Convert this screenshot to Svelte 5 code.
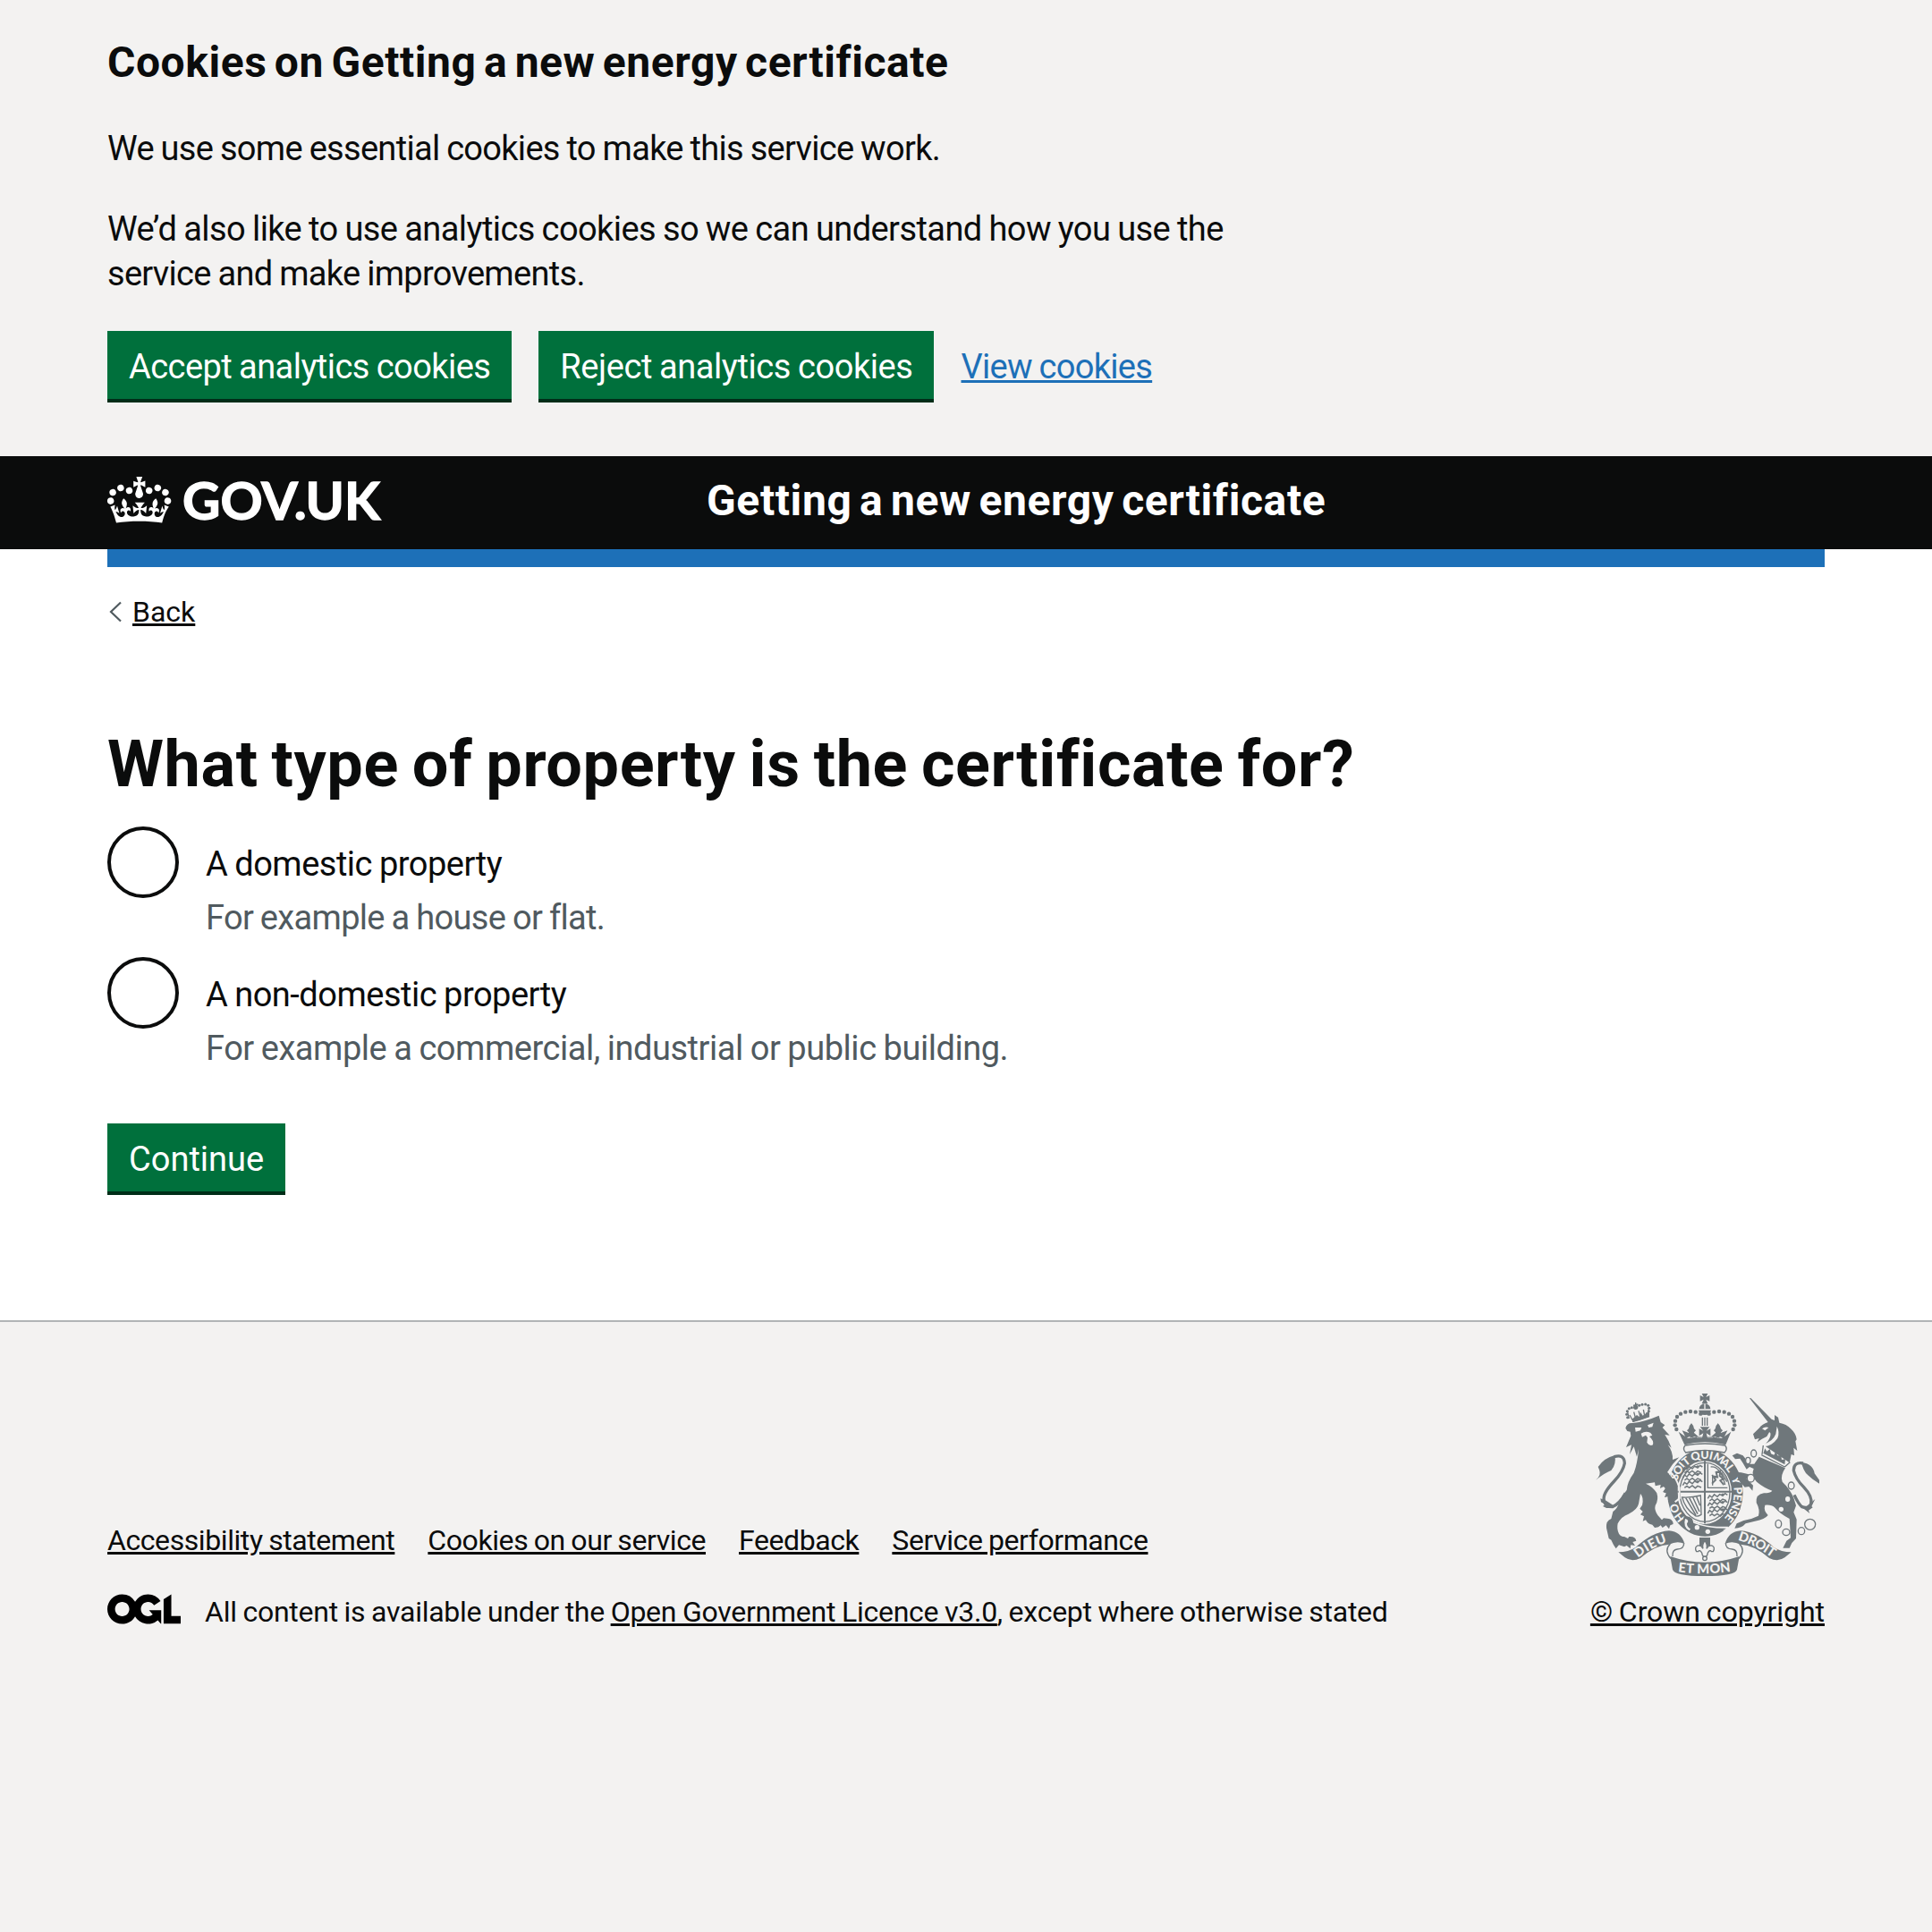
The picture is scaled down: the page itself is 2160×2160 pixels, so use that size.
<script>
  const options = [
    { value: 'domestic', label: 'A domestic property', hint: 'For example a house or flat.' },
    {
      value: 'non-domestic',
      label: 'A non-domestic property',
      hint: 'For example a commercial, industrial or public building.'
    }
  ];
  const footerLinks = [
    { id: 'accessibility', text: 'Accessibility statement' },
    { id: 'cookies', text: 'Cookies on our service' },
    { id: 'feedback', text: 'Feedback' },
    { id: 'performance', text: 'Service performance' }
  ];

  // Garter motto: each letter with its clockwise angle from the top of the ring
  const motto = [
    ['H', -131], ['O', -115], ['S', -65], ['O', -53], ['I', -43], ['T', -34],
    ['Q', -16], ['U', 0], ['I', 11], ['M', 25], ['A', 38], ['L', 50], ['Y', 71],
    ['P', 87], ['E', 98], ['N', 110], ['S', 122], ['E', 133]
  ].map(([char, deg]) => {
    const a = (deg * Math.PI) / 180;
    const rx = 98;
    const ry = 114;
    const x = 438 + rx * Math.sin(a);
    const y = 386 - ry * Math.cos(a);
    const turn = (Math.atan2(ry * Math.sin(a), rx * Math.cos(a)) * 180) / Math.PI;
    return { char, transform: `translate(${x} ${y}) rotate(${turn})` };
  });

  // Pearls of the large crown, left half; the right half is mirrored
  const pearls = [
    [424, 122], [407, 116], [390, 114], [373, 116], [357, 122],
    [345, 132], [339, 146], [338, 160], [343, 174]
  ];
  const smallPearls = [
    [179, 134], [176, 124], [178, 113], [184, 104], [193, 101], [218, 94],
    [228, 91], [239, 90], [248, 94], [251, 103], [250, 113], [245, 121]
  ];
  const chain = [
    [602, 255, 9, 12], [583, 279, 8, 11], [592, 338, 12, 13], [728, 363, 10, 12],
    [685, 491, 10, 13], [711, 519, 12, 11], [762, 515, 11, 12], [791, 493, 18, 18]
  ];
  const beasts = [
    [364, 300], [364, 325], [364, 350], [448, 394], [448, 419], [448, 444]
  ];
</script>

<div class="page">
  <section class="banner" aria-label="Cookies on Getting a new energy certificate">
    <h2>Cookies on Getting a new energy certificate</h2>
    <p class="essential">We use some essential cookies to make this service work.</p>
    <p class="analytics">We’d also like to use analytics cookies so we can understand how you use the service and make improvements.</p>
    <div class="actions">
      <button class="accept">Accept analytics cookies</button>
      <button class="reject">Reject analytics cookies</button>
      <a class="view" href="#cookies">View cookies</a>
    </div>
  </section>

  <header>
    <div class="bar">
      <svg class="govuk" viewBox="0 0 310 60" role="img" aria-label="GOV.UK">
        <path
          transform="translate(0 -1.4) scale(2)"
          fill-rule="evenodd"
          d="M6.7 12.2c1 .4 2.1-.1 2.5-1s-.1-2.1-1-2.5c-1-.4-2.1.1-2.5 1-.4 1 0 2.1 1 2.5m-4.3 2.5c.9.4 2-.1 2.4-1s-.1-2.1-1-2.5c-1-.4-2.1.1-2.5 1-.4 1 .1 2.1 1.1 2.5m-1.3 4.8c1 .4 2.1-.1 2.5-1s-.1-2.1-1-2.5c-1-.4-2.1.1-2.5 1-.4 1 0 2.1 1 2.5m10.4-5.8c1 .4 2.1-.1 2.5-1s-.1-2.1-1-2.5c-1-.4-2.1.1-2.5 1s0 2.1 1 2.5m17.4-1.5c-1 .4-2.1-.1-2.5-1s.1-2.1 1-2.5c1-.4 2.1.1 2.5 1 .5 1 0 2.1-1 2.5m4.3 2.5c-1 .4-2.1-.1-2.5-1s.1-2.1 1-2.5c1-.4 2.1.1 2.5 1 .5 1 0 2.1-1 2.5m1.3 4.8c-1 .4-2.1-.1-2.5-1s.1-2.1 1-2.5c1-.4 2.1.1 2.5 1 .4 1 0 2.1-1 2.5m-10.4-5.8c-1 .4-2.1-.1-2.5-1s.1-2.1 1-2.5c1-.4 2.1.1 2.5 1s0 2.1-1 2.5m-5.3-4.9 2.4 1.3V6.5l-2.4.8c-.1-.1-.1-.1-.2-.1s1-3 1-3h-3.4l1 3c-.1.1-.2.1-.2.1-.1.1-2.4-.7-2.4-.7v3.5L17 8.8c-.1.1 0 .2.1.3l-1.4 4.2c-.1.2-.1.4-.1.7 0 1.1.8 2.1 1.9 2.2h.6C19.2 16 20 15.1 20 14c0-.2 0-.4-.1-.7l-1.4-4.2c.2-.1.3-.2.3-.3m-1 20.3c4.6 0 8.9.3 12.8.9 1.1-4.6 2.4-7.2 3.8-9.1l-2.6-.9c.3 1.3.3 1.9 0 2.8-.4-.4-.8-1.2-1.1-2.4l-1.2 4.2c.8-.5 1.4-.9 2-.9-1.2 2.6-2.7 3.2-3.6 3-1.2-.2-1.7-1.3-1.5-2.2.3-1.3 1.6-1.6 2.2-.1 1.2-2.4-.8-3.1-2.1-2.4 1.9-1.9 2.2-3.6.6-5.7-2.2 1.7-2.2 3.3-1.2 5.6-1.3-1.5-3.3-.7-2.5 1.7.9-1.4 2.1-.5 1.9.8-.2 1.2-1.7 2.2-3.7 2-2.8-.2-3-2.2-3-3.7.7-.1 1.9.5 3 2l.5-4.4c-1.1 1.1-2.2 1.4-3.3 1.4.4-1.2 2.1-3.1 2.1-3.1h-5.5s1.8 1.9 2.1 3.1c-1.1 0-2.2-.3-3.3-1.4l.5 4.4c1.1-1.5 2.3-2.1 3-2-.1 1.6-.2 3.5-3 3.7-1.9.2-3.5-.8-3.7-2-.2-1.3 1-2.2 1.9-.8.7-2.4-1.3-3.1-2.6-1.7 1-2.3 1-4-1.2-5.6-1.6 2.1-1.3 3.8.6 5.7-1.3-.7-3.2 0-2.1 2.4.6-1.5 1.9-1.1 2.2.1.2.9-.4 1.9-1.5 2.2-1 .2-2.5-.5-3.6-3 .7.1 1.3.4 2 .9l-1.2-4.2c-.4 1.2-.8 2-1.2 2.4-.3-.8-.2-1.5 0-2.8l-2.6.9C2.6 22.7 3.9 25.4 5 30c3.9-.6 8.2-.9 12.8-.9"
        />
        <text x="84" y="54.7" textLength="221" lengthAdjust="spacingAndGlyphs">GOV.UK</text>
      </svg>
      <span class="service">Getting a new energy certificate</span>
    </div>
    <div class="stripe"></div>
  </header>

  <main>
    <a class="back" href="#back">
      <svg viewBox="0 0 14 24" aria-hidden="true"><path d="M13 1.5 2 12l11 10.5" /></svg>
      <span>Back</span>
    </a>
    <h1>What type of property is the certificate for?</h1>
    <div class="radios">
      {#each options as option (option.value)}
        <label class="option {option.value}">
          <input type="radio" name="property" value={option.value} />
          <span class="option-text">
            <span class="option-label">{option.label}</span>
            <span class="hint">{option.hint}</span>
          </span>
        </label>
      {/each}
    </div>
    <button class="continue">Continue</button>
  </main>

  <footer>
    <div class="meta">
      <nav>
        {#each footerLinks as link (link.id)}
          <a href="#{link.id}">{link.text}</a>
        {/each}
      </nav>
      <div class="licence">
        <svg viewBox="0 0 483.2 195.7" aria-hidden="true">
          <path
            d="M421.5 142.8V.1l-50.7 32.3v161.1h112.4v-50.7zm-122.3-9.6A47.12 47.12 0 0 1 221 97.8c0-26 21.1-47.1 47.1-47.1 16.7 0 31.4 8.7 39.7 21.8l42.7-27.2A97.63 97.63 0 0 0 268.1 0c-36.5 0-68.3 20.1-85.1 49.7A98 98 0 0 0 97.8 0C43.9 0 0 43.9 0 97.8s43.9 97.8 97.8 97.8c36.5 0 68.3-20.1 85.1-49.7a97.76 97.76 0 0 0 149.6 25.4l19.4 22.2h3v-87.8h-80l24.3 27.5zM97.8 145c-26 0-47.1-21.1-47.1-47.1s21.1-47.1 47.1-47.1 47.1 21.1 47.1 47.1S123.8 145 97.8 145"
          />
        </svg>
        <span>All content is available under the <a href="#ogl">Open Government Licence v3.0</a>, except where otherwise stated</span>
      </div>
    </div>

    <div class="copyright">
      <svg class="arms" viewBox="72 54 750 612" role="img" aria-label="Royal coat of arms">
        <!-- lion -->
        <path class="line tail" d="M134 266Q168 256 169 288Q164 316 134 348Q94 390 100 412Q104 434 128 434Q152 424 172 388" />
        <path d="M72 344Q92 330 84 310L80 300Q100 270 136 261Q142 292 124 312Q106 318 72 344ZM88 406L108 414L130 428L126 438L108 438L96 432L104 426L90 418Z" />
        <path
          d="M172 170Q176 152 196 153Q238 148 284 128L290 150L304 160L296 168L320 194L304 192Q318 212 326 236L314 226Q332 250 330 276L352 268Q328 290 312 318Q334 335 346 372L348 402L338 412L334 396L326 412L316 410L318 398L304 402L308 388L298 384L306 372L300 366L288 372L290 360L272 364L270 352L240 356Q264 366 277 388Q284 410 272 430Q268 445 280 462L294 478L300 472L318 474Q332 478 332 492L322 496L318 508L308 496L296 504L290 496L282 502L270 504L262 494Q246 492 240 478L230 482L234 466L222 460L230 450L220 440L228 428Q234 402 222 390L216 424Q212 444 182 458Q158 466 146 490Q142 510 150 524Q156 534 168 534L180 540L184 534Q206 532 208 548L196 552L204 564L190 562L188 574L176 564L168 568L150 562L140 574L132 562L124 545L116 540L108 505Q106 480 124 474L130 450Q145 440 150 420Q158 398 176 378Q178 350 200 320Q212 290 216 240L210 266L200 232L186 258L192 226L174 234L190 196L188 182L178 180Z"
        />
        <path class="cut" d="M204 168L226 168L222 178L206 182ZM246 160L266 152L262 166L250 168ZM224 188Q240 178 256 186L262 194L252 198Q268 212 264 226Q252 232 244 218L246 202L240 194L228 200Z" />
        <path class="line" d="M196 148Q222 142 252 130M184 138Q180 120 178 112M250 128L250 104M186 126L196 144M200 116L206 138M216 112L222 134M232 108L236 128M206 84V106M198 94L214 90" />
        <path d="M194 140L210 126L218 132L222 116L230 128L244 118L250 126L252 132L196 150Z" />
        {#each smallPearls as [x, y]}
          <circle cx={x} cy={y} r="4.6" />
        {/each}
        <circle cx="206" cy="100" r="8" />

        <!-- unicorn -->
        <path class="line tail" d="M768 288Q736 282 736 312Q742 340 770 368Q800 400 794 424Q786 442 764 434Q752 424 738 394" />
        <path d="M762 284Q802 290 806 322L822 344V356Q800 344 784 328Q768 314 762 284ZM808 408L796 432L800 436L786 446L790 456L770 440L780 432Z" />
        <path
          d="M588 70L592 69L662 140L672 144L672 126L684 134L688 152Q712 156 726 172Q744 188 746 208L742 214L748 246L736 236L738 262L728 258L722 288Q688 280 632 232Q654 214 658 196Q660 184 654 184L646 198L630 206L614 217L620 204L606 208L600 190L620 170Q630 156 650 150Z"
        />
        <path class="cut" d="M630 172Q640 164 652 168L640 178ZM680 164Q690 184 682 204Q664 230 636 232L634 224Q666 216 676 190ZM634 226L722 286L708 302L626 262Z" />
        <path class="line" d="M628 260L706 300M634 228L630 258M724 284L706 300" />
        <path d="M634 254L640 238L646 248L656 240L660 256L670 260L676 248L682 262L694 262L696 276L708 274L706 292Z" />
        <path
          d="M620 266L708 304Q690 330 698 350Q724 374 736 404L744 430L736 452L746 476L744 540L730 555L722 572L700 572L712 548L726 538L722 474Q690 458 672 436Q662 426 640 428Q634 446 650 462Q640 476 606 482L575 490Q562 506 538 506L545 490L568 480Q594 476 618 464Q624 444 611 420Q608 392 636 388Q658 388 664 380Q636 370 612 350Q592 330 602 306L588 300L578 308Q566 286 556 272L540 274L530 262L546 254L566 262L588 290L604 290Z"
        />

        <!-- garter and shield -->
        <ellipse class="halo" cx="439" cy="386" rx="129" ry="149" />
        <ellipse cx="439" cy="386" rx="127" ry="147" />
        <ellipse class="rim" cx="437" cy="386" rx="89" ry="104" />
        <ellipse class="line" cx="438" cy="385" rx="84" ry="99" />
        <g class="motto">
          {#each motto as { char, transform }}
            <text {transform}>{char}</text>
          {/each}
        </g>
        <path class="line cross" d="M438 280V490M346 383H528" />
        {#each beasts as [x, y]}
          <path class="line beast" d="M{x} {y + 12}l6-10 8 6 8-9 10 7 8-8 10 5 8-8 8 5M{x + 6} {y + 20}l8-6 8 6 10-7 10 8 8-7 12 5M{x + 18} {y + 2}l6-5M{x + 44} {y + 1}l8-5" />
        {/each}
        <path class="line" d="M448 290V370H514M458 300Q490 296 506 360M464 362V326M494 318L512 350" />
        <path class="line lionel" d="M462 356L474 344L466 332L480 334L476 318L490 314L488 330L500 340L490 346L502 360" />
        <path class="line harp" d="M362 402Q392 404 424 396L426 460Q410 470 404 462Q372 440 362 402Z" />
        <path class="line beast" d="M374 404L408 462M386 404L414 458M398 402L420 450M410 400L422 430" />
        <path class="strap" d="M376 474Q420 510 516 506" />
        <path d="M366 470Q380 460 396 474L400 488Q440 506 510 506Q440 550 382 512Q366 500 366 470Z" />
        <path class="cut" d="M372 474Q388 478 378 490Q378 502 390 508L386 514Q364 502 372 474Z" />
        <circle class="cut" cx="412" cy="503" r="8" />
        <circle class="cut" cx="448" cy="517" r="8" />

        <!-- paws resting on the garter -->
        <path class="edge" d="M322 316Q342 336 353 370V406L338 418M314 416L298 408" />
        <path d="M304 312Q334 335 346 372L348 402L338 412L334 396L326 412L316 410L318 398L304 402L308 388L298 384L306 372L296 360Z" />
        <path d="M548 318Q570 318 604 332L594 344L576 338L600 362L598 380L586 366L572 368L556 350L548 336Z" />
        {#each chain as [x, y, rx, ry]}
          <ellipse class="link" cx={x} cy={y} {rx} {ry} />
        {/each}
        <ellipse class="cut" cx="716" cy="408" rx="8" ry="9" />
        <ellipse class="cut" cx="694" cy="442" rx="8" ry="8" />

        <!-- crown -->
        <path class="headband" d="M372 228Q438 216 506 228Q516 240 504 252Q438 236 374 252Q362 240 372 228Z" />
        <path d="M350 182L372 198L362 178L384 186L393 154L402 186L416 198H460L474 186L482 154L492 186L514 178L504 198L526 182L508 226Q438 208 370 226Z" />
        <path class="cut" d="M378 204Q386 194 394 204Q402 194 412 202H464Q474 194 482 204Q490 194 498 204Q438 194 378 204Z" />
        <path d="M384 172Q386 160 393 154Q400 160 402 172L408 178L400 186H386L378 178ZM473 172Q475 160 482 154Q489 160 492 172L498 178L490 186H476L468 178ZM422 166H454L443 179L457 172V196L443 187L448 206H428L433 187L419 196V172L433 179Z" />
        <path class="line" d="M430 134V162M438 134V162M446 134V162" />
        <path d="M428 54H448L442 66L454 60V80L442 74L448 88H428L434 74L422 80V60L434 66ZM419 106A19 18 0 0 1 457 106ZM417 110H459Q456 126 438 126Q420 126 417 110Z" />
        <path class="slit" d="M438 88V106" />
        {#each pearls as [x, y]}
          <circle cx={x} cy={y} r="6.6" />
          <circle cx={876 - x} cy={y} r="6.6" />
        {/each}

        <!-- ribbon -->
        <path d="M148 586Q182 586 206 570Q262 518 318 514Q358 516 370 558Q346 546 318 560Q272 562 222 606Q192 620 170 604Z" />
        <path d="M728 586Q694 586 670 570Q614 518 558 514Q518 516 506 558Q530 546 558 560Q604 562 654 606Q684 620 706 604Z" />
        <path class="line" d="M322 558Q300 580 324 608M368 556Q368 576 346 576Q328 578 330 600M554 558Q576 580 552 608M508 556Q508 576 530 576Q548 578 546 600" />
        <path d="M322 600Q438 640 554 600L546 644Q540 666 438 666Q336 666 330 644Z" />
        <g class="scroll-text">
          <path id="dieu" class="guide" d="M214 606Q262 566 322 550" />
          <path id="droit" class="guide" d="M548 546Q604 560 666 606" />
          <path id="etmon" class="guide" d="M348 652Q438 664 530 650" />
          <text><textPath href="#dieu" textLength="112">DIEU</textPath></text>
          <text><textPath href="#droit" textLength="130">DROIT</textPath></text>
          <text><textPath href="#etmon" textLength="178">ET MON</textPath></text>
        </g>
        <path d="M420 537H456V566H420Z" />
        <path class="fleur" d="M438 548Q448 560 444 574Q450 562 462 564Q474 570 466 584L460 584Q456 576 448 588L446 596L438 606L430 596L428 588Q420 576 416 584L410 584Q402 570 414 564Q426 562 432 574Q428 560 438 548Z" />
        <circle class="fleur" cx="438" cy="607" r="7" />
      </svg>
      <a href="#crown">© Crown copyright</a>
    </div>
  </footer>
</div>

<style>
  :global(body) {
    margin: 0;
    background: #f3f2f1;
  }

  .page {
    display: flex;
    flex-direction: column;
    box-sizing: border-box;
    height: 2160px;
    overflow: hidden;
    color: #0b0c0c;
    font: 400 38px/50px Roboto, 'Liberation Sans', sans-serif;
    word-spacing: -1px;
    letter-spacing: -0.5px;
  }

  h1, h2, p {
    margin: 0;
  }

  a {
    color: inherit;
    text-decoration: underline;
    text-decoration-thickness: 3px;
    text-underline-offset: 2px;
  }

  button {
    padding: 21px 24px 17px;
    border: 0;
    border-radius: 0;
    background: #00703c;
    box-shadow: 0 4px 0 #002d18;
    color: #fff;
    font: inherit;
    line-height: 38px;
    word-spacing: inherit;
  }

  .accept {
    letter-spacing: -0.55px;
  }

  .reject {
    letter-spacing: -0.42px;
  }

  .banner {
    display: flex;
    flex-direction: column;
    box-sizing: border-box;
    height: 510px;
    padding: 40px 120px 0;
  }

  h2, .service {
    font-weight: 700;
    font-size: 48px;
    line-height: 60px;
    letter-spacing: 0.55px;
    word-spacing: -4px;
  }

  .banner p {
    max-width: 1270px;
    margin-bottom: 40px;
  }

  .banner .essential {
    margin-top: 41px;
    letter-spacing: -0.7px;
  }

  .banner .analytics {
    margin-bottom: 39px;
    letter-spacing: -0.7px;
  }

  .analytics::first-line {
    letter-spacing: -0.58px;
  }

  .actions {
    display: flex;
    align-items: center;
    gap: 30px;
  }

  .view {
    padding-top: 3px;
    color: #1d70b8;
    letter-spacing: -0.7px;
  }

  .bar {
    display: flex;
    box-sizing: border-box;
    height: 104px;
    padding: 16px 120px 0;
    background: #0b0c0c;
    color: #fff;
  }

  .govuk {
    width: 310px;
    height: 60px;
    margin-right: 360px;
    fill: currentColor;
  }

  .govuk text {
    font: 700 58px Lato, sans-serif;
    letter-spacing: 0;
    stroke: currentColor;
    stroke-width: 1.4;
  }

  .service {
    padding-top: 4px;
    letter-spacing: 0.62px;
  }

  .stripe {
    height: 20px;
    margin: 0 120px;
    background: #1d70b8;
  }

  header {
    background: #fff;
  }

  main {
    display: flex;
    flex-direction: column;
    align-items: flex-start;
    box-sizing: border-box;
    height: 842px;
    padding: 30px 120px 0;
    background: #fff;
  }

  .back {
    display: flex;
    align-items: center;
    gap: 12px;
    padding-left: 2px;
    font-size: 32px;
    line-height: 40px;
    letter-spacing: 0;
    text-decoration: none;
  }

  .back span {
    text-decoration: underline;
    text-decoration-thickness: 3px;
    text-underline-offset: 2px;
  }

  .back svg {
    width: 14px;
    height: 24px;
    fill: none;
    stroke: #505a5f;
    stroke-width: 2.2;
  }

  h1 {
    margin: 111px 0 29px;
    font-weight: 700;
    font-size: 72px;
    line-height: 80px;
    letter-spacing: 0.6px;
    word-spacing: -3.6px;
  }

  .radios {
    display: grid;
    gap: 20px;
    margin-bottom: 60px;
  }

  .option {
    display: flex;
    gap: 30px;
    height: 126px;
  }

  .option input {
    appearance: none;
    width: 80px;
    height: 80px;
    margin: 0;
    border: 4px solid #0b0c0c;
    border-radius: 50%;
  }

  .option-text {
    display: flex;
    flex-direction: column;
    gap: 10px;
    padding-top: 17px;
  }

  .hint {
    color: #505a5f;
    letter-spacing: -0.46px;
  }

  .domestic .hint {
    letter-spacing: -0.68px;
  }

  .continue {
    letter-spacing: 0;
  }

  footer {
    display: flex;
    flex: 1;
    align-items: flex-start;
    justify-content: space-between;
    padding: 80px 120px 0;
    border-top: 2px solid #b1b4b6;
    font-size: 32px;
    line-height: 40px;
  }

  .meta {
    display: flex;
    flex-direction: column;
    gap: 40px;
    padding-top: 144px;
  }

  nav {
    display: flex;
    gap: 37px;
    letter-spacing: -0.42px;
  }

  .licence {
    display: flex;
    align-items: flex-start;
    gap: 27px;
    letter-spacing: -0.25px;
  }

  .licence svg {
    width: 82px;
    height: 34px;
  }

  .copyright {
    display: flex;
    flex-direction: column;
    align-items: flex-end;
    gap: 20px;
    letter-spacing: -0.05px;
  }

  .arms {
    width: 250px;
    height: 204px;
    margin-right: 6px;
    fill: #6f777b;
    word-spacing: 0;
    letter-spacing: 0;
  }

  .arms .cut {
    fill: #f3f2f1;
  }

  .arms .line {
    fill: none;
    stroke: #6f777b;
    stroke-width: 4;
  }

  .arms .tail {
    stroke-width: 10;
  }

  .arms .beast {
    stroke-width: 4.5;
  }

  .arms .lionel,
  .arms .cross {
    stroke-width: 6;
  }

  .arms .link,
  .arms .rim,
  .arms .headband,
  .arms .fleur {
    fill: #f3f2f1;
    stroke: #6f777b;
    stroke-width: 4;
  }

  .arms .rim {
    stroke: #f3f2f1;
  }

  .arms .halo {
    fill: none;
    stroke: #f3f2f1;
    stroke-width: 8;
  }

  .arms .strap {
    fill: none;
    stroke: #f3f2f1;
    stroke-width: 12;
  }

  .arms .edge {
    fill: none;
    stroke: #f3f2f1;
    stroke-width: 6;
  }

  .arms .slit {
    stroke: #f3f2f1;
    stroke-width: 4;
  }

  .arms .guide {
    fill: none;
  }

  .arms text {
    fill: #f3f2f1;
    font: 900 44px Lato, sans-serif;
  }

  .arms .motto text {
    font-size: 38px;
    text-anchor: middle;
  }
</style>
